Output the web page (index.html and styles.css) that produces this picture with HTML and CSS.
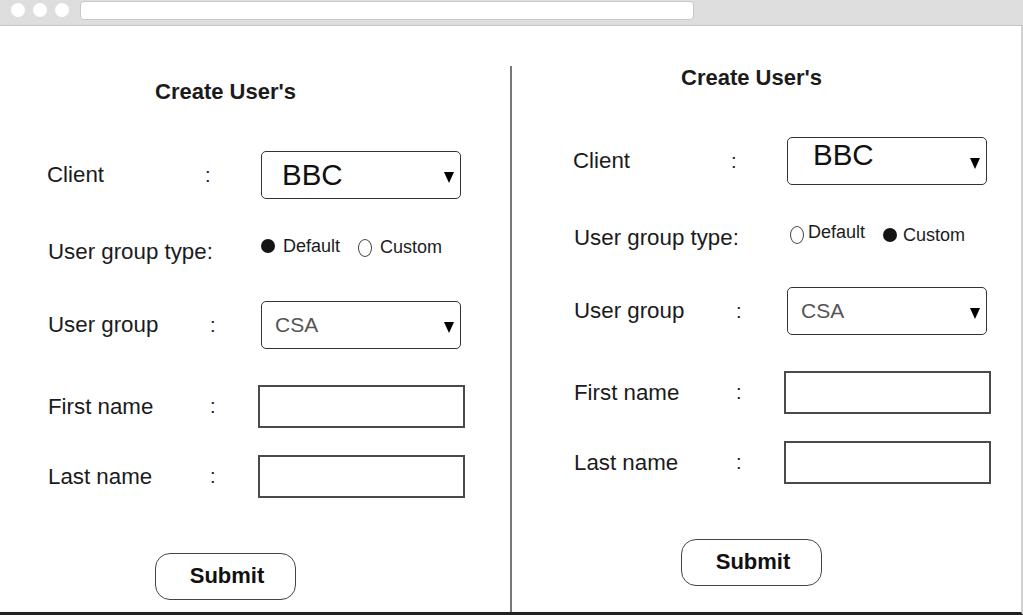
FILE: index.html
```html
<!DOCTYPE html>
<html lang="en">
<head>
<meta charset="utf-8">
<title>Create User's</title>
<link rel="stylesheet" href="styles.css">
</head>
<body>
<div class="window">
  <div class="chrome">
    <span class="dot"></span><span class="dot"></span><span class="dot"></span>
    <div class="url"></div>
  </div>
  <div class="main">
    <section class="panel panel-left">
      <h2 class="title">Create User's</h2>
      <div class="row row-client">
        <span class="label">Client</span><span class="colon">:</span>
        <div class="select"><span class="value big">BBC</span><span class="arrow"></span></div>
      </div>
      <div class="row row-radio">
        <span class="label">User group type:</span>
        <div class="radios">
          <span class="radio on"></span><span class="rtext">Default</span>
          <span class="radio off"></span><span class="rtext">Custom</span>
        </div>
      </div>
      <div class="row row-group">
        <span class="label">User group</span><span class="colon">:</span>
        <div class="select"><span class="value gray">CSA</span><span class="arrow"></span></div>
      </div>
      <div class="row row-first">
        <span class="label">First name</span><span class="colon">:</span>
        <div class="input"></div>
      </div>
      <div class="row row-last">
        <span class="label">Last name</span><span class="colon">:</span>
        <div class="input"></div>
      </div>
      <button class="submit">Submit</button>
    </section>
    <div class="divider"></div>
    <section class="panel panel-right">
      <h2 class="title">Create User's</h2>
      <div class="row row-client">
        <span class="label">Client</span><span class="colon">:</span>
        <div class="select"><span class="value big up">BBC</span><span class="arrow"></span></div>
      </div>
      <div class="row row-radio">
        <span class="label">User group type:</span>
        <div class="radios">
          <span class="radio off"></span><span class="rtext">Default</span>
          <span class="radio on"></span><span class="rtext">Custom</span>
        </div>
      </div>
      <div class="row row-group">
        <span class="label">User group</span><span class="colon">:</span>
        <div class="select"><span class="value gray">CSA</span><span class="arrow"></span></div>
      </div>
      <div class="row row-first">
        <span class="label">First name</span><span class="colon">:</span>
        <div class="input"></div>
      </div>
      <div class="row row-last">
        <span class="label">Last name</span><span class="colon">:</span>
        <div class="input"></div>
      </div>
      <button class="submit">Submit</button>
    </section>
  </div>
</div>
</body>
</html>
```

FILE: styles.css
```css
* { box-sizing: border-box; }
html, body {
  margin: 0;
  padding: 0;
  background: #fff;
}
body {
  width: 1023px;
  height: 615px;
  overflow: hidden;
  font-family: "Liberation Sans", Arial, sans-serif;
  color: #1b1b1b;
}
.window {
  display: flex;
  flex-direction: column;
  height: 615px;
}
.chrome {
  height: 26px;
  flex: none;
  background: #dedede;
  border-bottom: 1px solid #c6c6c6;
  display: flex;
  align-items: flex-start;
  padding: 3px 0 0 11px;
  gap: 8px;
}
.dot {
  width: 14px;
  height: 14px;
  border-radius: 50%;
  background: #fff;
  flex: none;
}
.url {
  margin: -2px 0 0 3px;
  width: 614px;
  height: 19px;
  background: #fff;
  border: 1px solid #c8c8c8;
  border-radius: 4px;
}
.main {
  flex: 1;
  display: flex;
  border-right: 2px solid #d2d2d2;
  border-bottom: 3px solid #222;
}
.panel {
  display: flex;
  flex-direction: column;
  align-items: flex-start;
}
.panel-left {
  width: 510px;
  padding: 54px 0 0 48px;
}
.panel-right {
  flex: 1;
  padding: 40px 0 0 62px;
}
.divider {
  width: 2px;
  margin-top: 40px;
  background: #777;
  flex: none;
}
.title {
  margin: 0 0 0 107px;
  height: 24px;
  line-height: 24px;
  font-size: 22px;
  font-weight: bold;
}
.row {
  display: flex;
  align-items: center;
}
.label {
  width: 162px;
  font-size: 22.3px;
  white-space: nowrap;
  flex: none;
}
.colon {
  width: 48px;
  font-size: 20px;
  flex: none;
}
.row-client { margin-top: 47px; height: 48px; }
.row-client .label { margin-left: -1px; width: 158px; }
.row-client .colon { width: 53px; }
.row-radio { margin-top: 38px; height: 30px; }
.row-group { margin-top: 34px; height: 48px; }
.row-first { margin-top: 36px; height: 43px; }
.row-last { margin-top: 27px; height: 43px; }
.select {
  margin-left: 3px;
  width: 200px;
  height: 48px;
  border: 1px solid #333;
  border-radius: 5px;
  display: flex;
  align-items: center;
  justify-content: space-between;
  padding: 0 6px 0 13px;
}
.value.big {
  font-size: 29.5px;
  margin-left: 7px;
  color: #111;
  margin-top: -1px;
}
.value.big.up { margin-top: -12px; margin-left: 12px; }
.value.gray {
  font-size: 21px;
  color: #555;
}
.arrow {
  width: 0;
  height: 0;
  border-left: 5.5px solid transparent;
  border-right: 5.5px solid transparent;
  border-top: 11px solid #000;
  margin-top: 5px;
}
.input {
  width: 207px;
  height: 43px;
  border: 2px solid #4a4a4a;
}
.radios {
  display: flex;
  align-items: center;
  margin-left: 51px;
  margin-top: -12px;
  font-size: 18px;
}
.panel-right .radios { margin-left: 54px; margin-top: -8px; }
.radio {
  flex: none;
  border-radius: 50%;
}
.radio.on {
  width: 14px;
  height: 14px;
  background: #141414;
  margin-right: 8px;
}
.radio.off {
  width: 14px;
  height: 18px;
  border: 1px solid #444;
  margin-right: 8px;
  margin-top: 4px;
}
.panel-right .radio.off { margin-right: 4px; margin-top: 2px; }
.panel-right .radio.on { margin-top: 2px; margin-right: 6px; }
.panel-right .rtext:nth-of-type(2) { margin-top: -4px; }
.rtext {
  margin-right: 18px;
}
.rtext:last-child { margin-right: 0; margin-top: 3px; }
.submit {
  margin: 55px 0 0 107px;
  width: 141px;
  height: 47px;
  background: #fff;
  border: 1px solid #444;
  border-radius: 15px;
  font-family: "Liberation Sans", Arial, sans-serif;
  font-size: 22px;
  font-weight: bold;
  color: #111;
  padding: 0 0 2px 3px;
}
```
